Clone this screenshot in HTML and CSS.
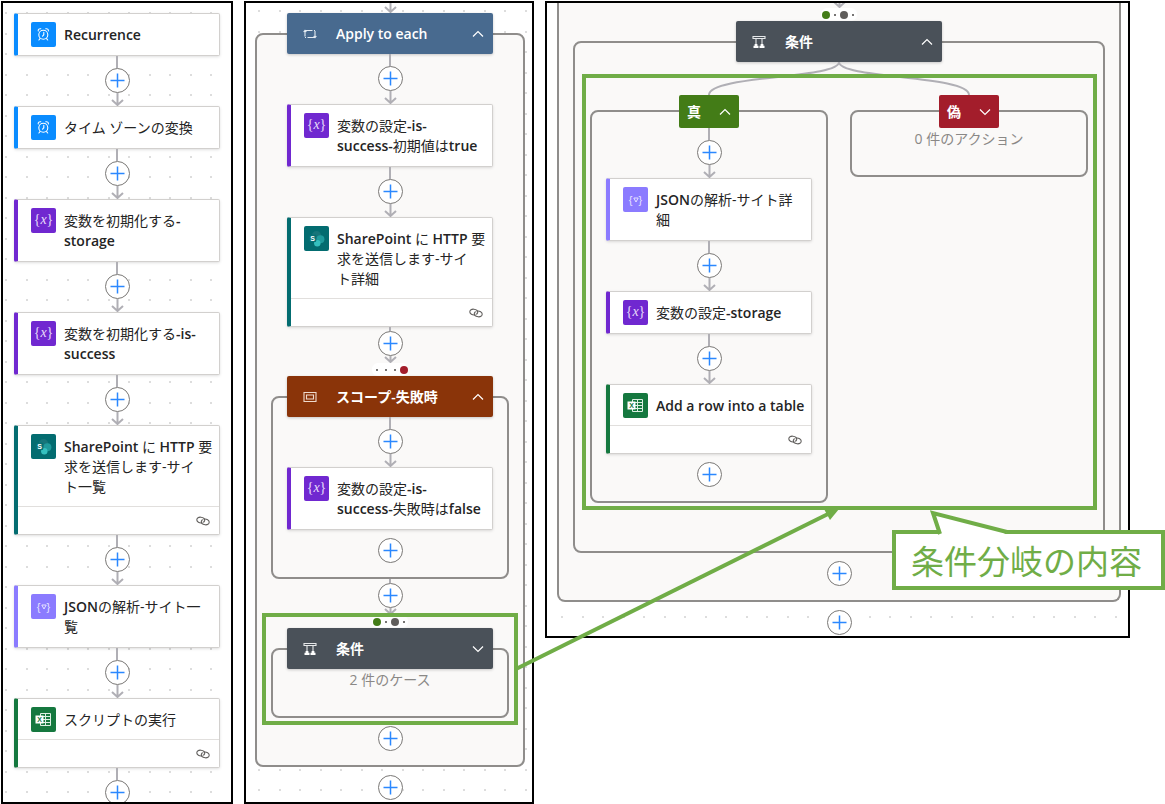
FILE: index.html
```html
<!DOCTYPE html>
<html lang="ja">
<head>
    <meta charset="UTF-8">
    <meta name="viewport" content="width=device-width, initial-scale=1.0">
    <title>フローの全体図</title>
    <link rel="stylesheet" href="styles.css">
</head>
<body>
    <!-- Shared icons -->
    <svg class="sprite" aria-hidden="true">
        <symbol id="i-plus" viewBox="0 0 15 15"><path d="M7.5 0.5v14M0.5 7.5h14" fill="none" stroke="#2b88ff" stroke-width="1.5"/></symbol>
        <symbol id="i-arrow" viewBox="0 0 13 13"><path d="M6.5 0v11.5M1 7l5.5 5L12 7" fill="none" stroke="#b0afb5" stroke-width="2"/></symbol>
        <symbol id="i-up" viewBox="0 0 12 8"><path d="M1 6.5l5-5 5 5" fill="none" stroke="#fff" stroke-width="1.2"/></symbol>
        <symbol id="i-down" viewBox="0 0 12 8"><path d="M1 1.5l5 5 5-5" fill="none" stroke="#fff" stroke-width="1.2"/></symbol>
        <symbol id="i-clock" viewBox="0 0 25 25">
            <g fill="none" stroke="#fff" stroke-width="1.1" stroke-linecap="round">
                <circle cx="12.3" cy="12.8" r="4.5"/>
                <path d="M12.8 10.4v2.300l-1.200 1.500M7.200 9a2 2 0 0 1 2.600-2.200M17.400 9a2 2 0 0 0-2.600-2.200M9 16.600l-1.100 1.400M15.600 16.600l1.100 1.400"/>
            </g>
        </symbol>
        <symbol id="i-sharepoint" viewBox="0 0 25 25">
            <circle cx="12.5" cy="9.8" r="4.8" fill="#17757a"/>
            <circle cx="16.4" cy="13.2" r="4" fill="#1f9a9c"/>
            <circle cx="13.3" cy="17.3" r="3.2" fill="#35c0bf"/>
            <rect x="4.8" y="8.7" width="7.4" height="7.4" rx="1" fill="#067075"/>
        </symbol>
        <symbol id="i-excel" viewBox="0 0 25 25">
            <path d="M9.5 6.5h10v12h-10zM14.5 6.5v12M9.5 9.5h10M9.5 12.5h10M9.5 15.5h10" fill="none" stroke="#dcefe3" stroke-width="1"/>
            <rect x="4.5" y="8.5" width="8" height="8" fill="#fff"/>
        </symbol>
        <symbol id="i-link" viewBox="0 0 14 10">
            <g fill="none" stroke="#605e5c" stroke-width="1.1">
                <path d="M6 6.900C3.200 7.300.9 5.900.8 3.900.7 2 2.700.9 4.900 1.200 7.200 1.500 8.900 3 8.700 4.700 8.500 5.800 7.600 6.300 6.600 6.200"/>
                <path d="M8 3.100C10.800 2.700 13.100 4.100 13.200 6.100 13.300 8 11.300 9.100 9.100 8.800 6.800 8.500 5.100 7 5.300 5.300 5.500 4.200 6.400 3.700 7.400 3.800"/>
            </g>
        </symbol>
        <symbol id="i-loop" viewBox="0 0 14 14">
            <path d="M2 9.500V3.500h7.500M12 4v6.500H4.500M.6 5L2 3.400 3.400 5M10.600 9L12 10.600 13.400 9M2 10.500h1M11 3.500h1" fill="none" stroke="#e4ebf2" stroke-width="1.1"/>
        </symbol>
        <symbol id="i-scope" viewBox="0 0 14 14">
            <path d="M1 2.500h12v9H1zM3.500 5h7v4h-7z" fill="none" stroke="#eedacd" stroke-width="1.1"/>
        </symbol>
        <symbol id="i-condition" viewBox="0 0 14 14">
            <path d="M1 1.500h12v2H1zM4 3.500v6M10 3.500v6" fill="none" stroke="#e6e8ea" stroke-width="1.1"/>
            <path d="M2.600 9h2.800v1.800h1.100V13h-5v-2.200h1.100zM8.600 9h2.800v1.800h1.100V13h-5v-2.200h1.100z" fill="#fff"/>
        </symbol>
    </svg>

    <main class="diagram">
        <!-- Whole flow -->
        <section class="panel flow">
            <div class="card blue">
                <div class="card-body"><svg class="icon"><use href="#i-clock"/></svg><span class="title"><b>Recurrence</b></span></div>
            </div>
            <div class="connector"><span class="line"></span><button class="add" aria-label="追加"><svg><use href="#i-plus"/></svg></button><svg class="arrow"><use href="#i-arrow"/></svg></div>
            <div class="card blue">
                <div class="card-body"><svg class="icon"><use href="#i-clock"/></svg><span class="title">タイム ゾーンの変換</span></div>
            </div>
            <div class="connector"><span class="line"></span><button class="add" aria-label="追加"><svg><use href="#i-plus"/></svg></button><svg class="arrow"><use href="#i-arrow"/></svg></div>
            <div class="card purple">
                <div class="card-body"><span class="icon var">{<i>x</i>}</span><span class="title">変数を初期化する<b>-<br>storage</b></span></div>
            </div>
            <div class="connector"><span class="line"></span><button class="add" aria-label="追加"><svg><use href="#i-plus"/></svg></button><svg class="arrow"><use href="#i-arrow"/></svg></div>
            <div class="card purple">
                <div class="card-body"><span class="icon var">{<i>x</i>}</span><span class="title">変数を初期化する<b>-is-<br>success</b></span></div>
            </div>
            <div class="connector"><span class="line"></span><button class="add" aria-label="追加"><svg><use href="#i-plus"/></svg></button><svg class="arrow"><use href="#i-arrow"/></svg></div>
            <div class="card teal">
                <div class="card-body"><svg class="icon letter"><use href="#i-sharepoint"/><text x="8.5" y="15">S</text></svg><span class="title"><b>SharePoint</b> に <b>HTTP</b> 要<br>求を送信します-サイ<br>ト一覧</span></div>
                <div class="card-footer"><svg class="link"><use href="#i-link"/></svg></div>
            </div>
            <div class="connector"><span class="line"></span><button class="add" aria-label="追加"><svg><use href="#i-plus"/></svg></button><svg class="arrow"><use href="#i-arrow"/></svg></div>
            <div class="card violet">
                <div class="card-body"><span class="icon json">{<svg viewBox="0 0 6 6"><path d="M.8 1h4.400L3 5z"/></svg>}</span><span class="title"><b>JSON</b>の解析-サイト一<br>覧</span></div>
            </div>
            <div class="connector"><span class="line"></span><button class="add" aria-label="追加"><svg><use href="#i-plus"/></svg></button><svg class="arrow"><use href="#i-arrow"/></svg></div>
            <div class="card green">
                <div class="card-body"><svg class="icon letter"><use href="#i-excel"/><text x="8.5" y="15">X</text></svg><span class="title">スクリプトの実行</span></div>
                <div class="card-footer"><svg class="link"><use href="#i-link"/></svg></div>
            </div>
            <div class="connector cut"><span class="line"></span><button class="add" aria-label="追加"><svg><use href="#i-plus"/></svg></button></div>
        </section>

        <!-- Apply to each -->
        <section class="panel loop">
            <svg class="arrow entry" viewBox="0 3 13 10"><use href="#i-arrow" width="13" height="13"/></svg>
            <div class="group">
                <button class="group-header apply"><svg class="mark"><use href="#i-loop"/></svg><span class="name">Apply to each</span><svg class="chevron"><use href="#i-up"/></svg></button>
                <div class="connector"><span class="line"></span><button class="add" aria-label="追加"><svg><use href="#i-plus"/></svg></button><svg class="arrow"><use href="#i-arrow"/></svg></div>
                <div class="card purple">
                    <div class="card-body"><span class="icon var">{<i>x</i>}</span><span class="title">変数の設定<b>-is-<br>success-</b>初期値は<b>true</b></span></div>
                </div>
                <div class="connector"><span class="line"></span><button class="add" aria-label="追加"><svg><use href="#i-plus"/></svg></button><svg class="arrow"><use href="#i-arrow"/></svg></div>
                <div class="card teal">
                    <div class="card-body"><svg class="icon letter"><use href="#i-sharepoint"/><text x="8.5" y="15">S</text></svg><span class="title"><b>SharePoint</b> に <b>HTTP</b> 要<br>求を送信します-サイ<br>ト詳細</span></div>
                    <div class="card-footer"><svg class="link"><use href="#i-link"/></svg></div>
                </div>
                <div class="connector compact"><span class="line"></span><button class="add" aria-label="追加"><svg><use href="#i-plus"/></svg></button><svg class="arrow" viewBox="0 6 13 7"><use href="#i-arrow" width="13" height="13"/></svg></div>
                <div class="run-after"><i></i><i></i><i></i><i class="failed"></i></div>
                <div class="group nested">
                    <button class="group-header scope"><svg class="mark"><use href="#i-scope"/></svg><span class="name">スコープ-失敗時</span><svg class="chevron"><use href="#i-up"/></svg></button>
                    <div class="connector"><span class="line"></span><button class="add" aria-label="追加"><svg><use href="#i-plus"/></svg></button><svg class="arrow"><use href="#i-arrow"/></svg></div>
                    <div class="card purple">
                        <div class="card-body"><span class="icon var">{<i>x</i>}</span><span class="title">変数の設定<b>-is-<br>success-</b>失敗時は<b>false</b></span></div>
                    </div>
                    <button class="add last" aria-label="追加"><svg><use href="#i-plus"/></svg></button>
                </div>
                <div class="connector compact"><span class="line"></span><button class="add" aria-label="追加"><svg><use href="#i-plus"/></svg></button><svg class="arrow" viewBox="0 6 13 7"><use href="#i-arrow" width="13" height="13"/></svg></div>
                <div class="run-after"><i class="ok"></i><i></i><i class="skipped"></i><i></i></div>
                <div class="group nested collapsed">
                    <button class="group-header condition"><svg class="mark"><use href="#i-condition"/></svg><span class="name">条件</span><svg class="chevron"><use href="#i-down"/></svg></button>
                    <p class="count">2 件のケース</p>
                    <div class="highlight summary"></div>
                </div>
                <button class="add last" aria-label="追加"><svg><use href="#i-plus"/></svg></button>
            </div>
            <button class="add after" aria-label="追加"><svg><use href="#i-plus"/></svg></button>
        </section>

        <!-- Inside of the condition -->
        <section class="panel detail">
            <div class="group open">
                <svg class="arrow clipped" viewBox="0 8 13 5"><use href="#i-arrow" width="13" height="13"/></svg>
                <div class="run-after"><i class="ok"></i><i></i><i class="skipped"></i><i></i></div>
                <div class="group cases">
                    <button class="group-header condition"><svg class="mark"><use href="#i-condition"/></svg><span class="name">条件</span><svg class="chevron"><use href="#i-up"/></svg></button>
                    <svg class="split" viewBox="0 0 498 33" preserveAspectRatio="none"><path d="M249 0C249 17 119 13 119 33M249 0C249 17 379 13 379 33" fill="none" stroke="#b0afb5" stroke-width="2"/></svg>
                    <div class="case-row">
                        <div class="case">
                            <button class="case-header yes"><span>真</span><svg class="chevron"><use href="#i-up"/></svg></button>
                            <div class="connector"><span class="line"></span><button class="add" aria-label="追加"><svg><use href="#i-plus"/></svg></button><svg class="arrow"><use href="#i-arrow"/></svg></div>
                            <div class="card violet">
                                <div class="card-body"><span class="icon json">{<svg viewBox="0 0 6 6"><path d="M.8 1h4.400L3 5z"/></svg>}</span><span class="title"><b>JSON</b>の解析-サイト詳<br>細</span></div>
                            </div>
                            <div class="connector"><span class="line"></span><button class="add" aria-label="追加"><svg><use href="#i-plus"/></svg></button><svg class="arrow"><use href="#i-arrow"/></svg></div>
                            <div class="card purple">
                                <div class="card-body"><span class="icon var">{<i>x</i>}</span><span class="title">変数の設定<b>-storage</b></span></div>
                            </div>
                            <div class="connector"><span class="line"></span><button class="add" aria-label="追加"><svg><use href="#i-plus"/></svg></button><svg class="arrow"><use href="#i-arrow"/></svg></div>
                            <div class="card green">
                                <div class="card-body"><svg class="icon letter"><use href="#i-excel"/><text x="8.5" y="15">X</text></svg><span class="title"><b>Add a row into a table</b></span></div>
                                <div class="card-footer"><svg class="link"><use href="#i-link"/></svg></div>
                            </div>
                            <button class="add last" aria-label="追加"><svg><use href="#i-plus"/></svg></button>
                        </div>
                        <div class="case collapsed">
                            <button class="case-header no"><span>偽</span><svg class="chevron"><use href="#i-down"/></svg></button>
                            <p class="count">0 件のアクション</p>
                        </div>
                    </div>
                    <div class="highlight branches"></div>
                </div>
                <button class="add last" aria-label="追加"><svg><use href="#i-plus"/></svg></button>
            </div>
            <button class="add after" aria-label="追加"><svg><use href="#i-plus"/></svg></button>
        </section>

        <!-- Annotations over the panels -->
        <div class="callout">条件分岐の内容</div>
        <svg class="annotations" viewBox="0 0 1165 804" aria-hidden="true">
            <path d="M516 669L828 514" stroke="#70ad47" stroke-width="4"/>
            <path d="M839 509l-15 0 6 11z" fill="#70ad47"/>
            <path d="M939 534L933 513 1007 532 1004 534z" fill="#fff"/>
            <path d="M940 534L933 513 1007 532" fill="none" stroke="#70ad47" stroke-width="4"/>
        </svg>
    </main>
</body>
</html>
```
FILE: styles.css
```css
/* General Styles */
* {
    box-sizing: border-box;
}

body {
    margin: 0;
    background-color: #ffffff;
    color: #242424;
    font-family: 'Open Sans', 'Noto Sans CJK JP', sans-serif;
    font-size: 14px;
    line-height: 20px;
}

button {
    border: 0;
    padding: 0;
    font: inherit;
    cursor: pointer;
}

svg {
    display: block;
    flex: none;
}

.sprite {
    position: absolute;
    width: 0;
    height: 0;
}

/* Panels */
.diagram {
    position: relative;
    display: flex;
    align-items: flex-start;
    gap: 11px;
    width: max-content;
    padding: 1px 0 0 1px;
}

.panel {
    display: flex;
    flex-direction: column;
    align-items: center;
    border: 2px solid #000000;
    background-color: #ffffff;
    background-image:
        radial-gradient(circle at 1px 1px, #dddddd 1px, transparent 1px),
        radial-gradient(circle at 22px 1px, #dddddd 1px, transparent 1px),
        radial-gradient(circle at 1px 22px, #dddddd 1px, transparent 1px),
        radial-gradient(circle at 22px 22px, #dddddd 1px, transparent 1px);
    background-size: 41px 41px;
}

.flow {
    padding: 10px 11px 0;
    background-position: 2px 9px;
}

.loop {
    padding: 0 7px 2px 9px;
    background-position: 12px 7px;
}

.detail {
    padding: 0 7px 1px 10px;
    background-position: 14px 39px;
}

/* Action Cards */
.card {
    width: 206px;
    border: 1px solid #d2d0ce;
    border-left: 4px solid;
    border-radius: 2px;
    background-color: #ffffff;
    box-shadow: 0 1px 3px rgba(0, 0, 0, 0.13);
}

.card-body {
    display: flex;
    align-items: flex-start;
    gap: 8px;
    padding: 8px 0 8px 13px;
}

.card-footer {
    display: flex;
    justify-content: flex-end;
    align-items: center;
    height: 28px;
    margin-top: -1px;
    padding-right: 9px;
    border-top: 1px solid #e1dfdd;
}

.title {
    padding: 3px 0 2px;
    white-space: nowrap;
}

.title b {
    font-weight: 600;
}

.icon {
    flex: none;
    width: 25px;
    height: 25px;
    border-radius: 2px;
}

.letter text {
    fill: #ffffff;
    font-family: 'Liberation Sans', sans-serif;
    font-size: 7px;
    font-weight: bold;
    text-anchor: middle;
}

.green .letter text {
    fill: #15783f;
}

.var {
    color: #e9dcfa;
    font-family: 'Liberation Serif', serif;
    font-size: 14px;
    line-height: 23px;
    text-align: center;
}

.json {
    display: flex;
    justify-content: center;
    align-items: center;
    color: #e6e2ff;
    font-family: 'Liberation Sans', sans-serif;
    font-size: 11px;
}

.json svg {
    width: 6px;
    height: 6px;
    fill: none;
    stroke: #e6e2ff;
}

.link {
    width: 14px;
    height: 10px;
}

.blue {
    border-left-color: #0a8cff;
}

.blue .icon {
    background-color: #0a8cff;
}

.purple {
    border-left-color: #7028d0;
}

.purple .icon {
    background-color: #7028d0;
}

.teal {
    border-left-color: #036c70;
}

.teal .icon {
    background-color: #036c70;
}

.violet {
    border-left-color: #8b7bff;
}

.violet .icon {
    background-color: #8b7bff;
}

.green {
    border-left-color: #15783f;
}

.green .icon {
    background-color: #15783f;
}

/* Connectors */
.connector {
    display: flex;
    flex-direction: column;
    align-items: center;
    height: 50px;
}

.connector.compact {
    height: 36px;
}

.connector.compact .arrow {
    height: 7px;
}

.connector.cut {
    height: 34px;
    overflow: hidden;
}

.connector.cut .line {
    flex: none;
    height: 12px;
}

.line {
    flex: 1;
    width: 2px;
    background-color: #b0afb5;
}

.arrow {
    width: 13px;
    height: 13px;
}

.arrow.entry {
    height: 10px;
}

.arrow.clipped {
    height: 5px;
}

.add {
    display: flex;
    flex: none;
    justify-content: center;
    align-items: center;
    width: 25px;
    height: 25px;
    border: 1px solid #7a7876;
    border-radius: 50%;
    background-color: #ffffff;
}

.add svg {
    width: 15px;
    height: 15px;
}

.add.last {
    margin: 8px 0 14px;
}

.add.after {
    margin-top: 8px;
}

/* Run-after Dots */
.run-after {
    display: grid;
    grid-template-columns: repeat(4, 9px);
    place-items: center;
    height: 13px;
    border-radius: 6px;
    background-color: #ffffff;
}

.run-after i {
    width: 2px;
    height: 2px;
    border-radius: 50%;
    background-color: #484644;
}

.run-after .ok,
.run-after .skipped,
.run-after .failed {
    width: 8px;
    height: 8px;
}

.run-after .ok {
    background-color: #437c17;
}

.run-after .skipped {
    background-color: #5f5d5b;
}

.run-after .failed {
    background-color: #a31d2b;
}

/* Groups */
.group,
.case {
    position: relative;
    display: flex;
    flex-direction: column;
    align-items: center;
    border: 2px solid #8f8d8b;
    border-radius: 8px;
    background-color: #faf9f8;
}

.group {
    margin-top: 20px;
    padding: 0 30px;
}

.group.nested {
    margin: 20px -16px 0;
    padding: 0 14px;
}

.group.open {
    margin-top: 0;
    padding: 0 14px;
    border-top: 0;
    border-radius: 0 0 8px 8px;
}

.group.cases {
    padding: 0 15px 48px;
}

.group-header {
    display: flex;
    align-items: center;
    width: 206px;
    height: 41px;
    margin-top: -22px;
    padding: 0 9px 0 16px;
    border-radius: 2px;
    color: #ffffff;
    font-weight: 600;
    text-align: left;
    box-shadow: 0 1px 3px rgba(0, 0, 0, 0.2);
}

.mark {
    width: 14px;
    height: 14px;
}

.name {
    flex: 1;
    margin-left: 19px;
}

.chevron {
    width: 12px;
    height: 8px;
}

.apply {
    background-color: #486a8f;
}

.scope {
    background-color: #8a3409;
}

.condition {
    background-color: #4a5159;
}

.count {
    margin: 1px 0 26px;
    color: #8a8886;
}

/* Condition Branches */
.split {
    width: 100%;
    height: 33px;
}

.case-row {
    display: flex;
    align-items: flex-start;
    gap: 22px;
    margin-top: 15px;
}

.case {
    width: 238px;
}

.case-header {
    display: flex;
    justify-content: space-between;
    align-items: center;
    width: 60px;
    height: 33px;
    margin-top: -17px;
    padding: 0 8px;
    border-radius: 2px;
    color: #ffffff;
    font-weight: 600;
}

.yes {
    background-color: #437c17;
}

.no {
    background-color: #a31d2b;
}

/* Annotations */
.highlight {
    position: absolute;
    border: 4px solid #70ad47;
    pointer-events: none;
}

.summary {
    inset: -37px -11px -9px;
}

.branches {
    inset: 31px 6px 41px 7px;
}

.callout {
    position: absolute;
    top: 530px;
    left: 892px;
    padding: 0 19px 0 15px;
    border: 4px solid #70ad47;
    background-color: #ffffff;
    color: #70ad47;
    font-family: 'Noto Sans CJK JP', sans-serif;
    font-size: 33px;
    line-height: 52px;
    white-space: nowrap;
}

.annotations {
    position: absolute;
    top: 0;
    left: 0;
    width: 1165px;
    height: 804px;
    pointer-events: none;
}
```
